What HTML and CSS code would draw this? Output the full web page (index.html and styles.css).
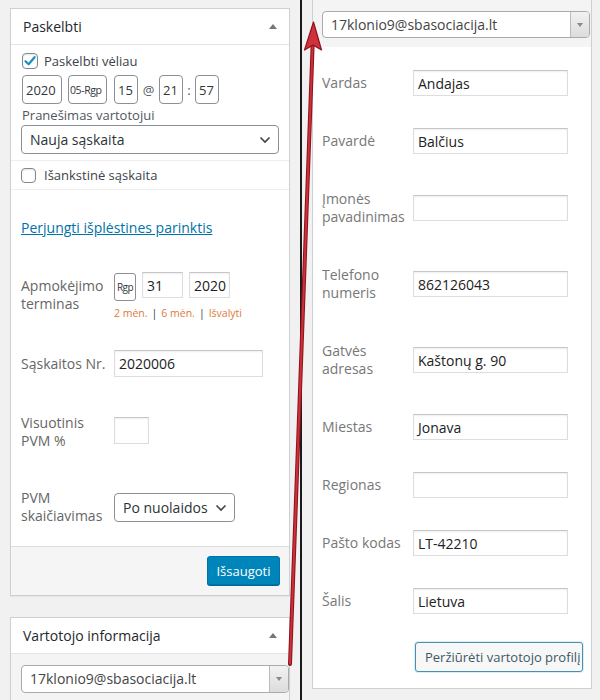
FILE: index.html
```html
<!DOCTYPE html>
<html lang="lt">
<head>
<meta charset="utf-8">
<title>Sąskaita</title>
<link rel="stylesheet" href="styles.css">
</head>
<body>
<div class="screen">
  <div class="col-left">
    <div class="postbox">
      <div class="hndle"><span>Paskelbti</span><span class="toggle"></span></div>
      <div class="inside">
        <div class="check-row">
          <span class="cb checked"><svg viewBox="0 0 16 16" width="16" height="16"><path d="M3.5 8.2 L6.6 11.2 L12.6 4.2" fill="none" stroke="#1e8cbe" stroke-width="2.2" stroke-linecap="round" stroke-linejoin="round"/></svg></span>
          <span>Paskelbti vėliau</span>
        </div>
        <div class="date-row">
          <span class="dbox w-yr">2020</span>
          <span class="dbox w-mo">05-Rgp</span>
          <span class="dbox w-dd">15</span>
          <span class="dsep w-at">@</span>
          <span class="dbox w-dd">21</span>
          <span class="dsep w-col">:</span>
          <span class="dbox w-dd">57</span>
        </div>
        <div class="notice-label">Pranešimas vartotojui</div>
        <div class="wpselect wide"><span>Nauja sąskaita</span><svg class="chev" viewBox="0 0 12 8" width="12" height="8"><path d="M1.5 1.5 L6 6 L10.5 1.5" fill="none" stroke="#3c434a" stroke-width="1.6"/></svg></div>
      </div>
      <div class="misc-row">
        <span class="cb"></span>
        <span>Išankstinė sąskaita</span>
      </div>
      <div class="adv"><a href="#" class="adv-link">Perjungti išplėstines parinktis</a></div>

      <div class="lfield row-due">
        <div class="lbl">Apmokėjimo<br>terminas</div>
        <div class="ctrl">
          <div class="due-boxes">
            <span class="mini-sel">Rgp</span>
            <span class="oinput w-41">31</span>
            <span class="oinput w-41">2020</span>
          </div>
          <div class="due-links"><a href="#">2 mėn.</a><span class="bar">|</span><a href="#">6 mėn.</a><span class="bar">|</span><a href="#">Išvalyti</a></div>
        </div>
      </div>

      <div class="lfield row-nr">
        <div class="lbl">Sąskaitos Nr.</div>
        <span class="oinput w-149">2020006</span>
      </div>

      <div class="lfield row-vat">
        <div class="lbl">Visuotinis<br>PVM %</div>
        <span class="oinput w-35"></span>
      </div>

      <div class="lfield row-calc">
        <div class="lbl">PVM<br>skaičiavimas</div>
        <div class="wpselect calc"><span>Po nuolaidos</span><svg class="chev" viewBox="0 0 12 8" width="12" height="8"><path d="M1.5 1.5 L6 6 L10.5 1.5" fill="none" stroke="#3c434a" stroke-width="1.6"/></svg></div>
      </div>

      <div class="major">
        <button class="btn-primary" type="button">Išsaugoti</button>
      </div>
    </div>

    <div class="postbox second">
      <div class="hndle"><span>Vartotojo informacija</span><span class="toggle"></span></div>
      <div class="grey-body">
        <div class="s2"><span class="s2-txt">17klonio9@sbasociacija.lt</span><span class="s2-arr"><span class="tri-down"></span></span></div>
      </div>
    </div>
  </div>

  <div class="divider"></div>

  <div class="col-right">
    <div class="rpanel">
      <div class="grey-top">
        <div class="s2"><span class="s2-txt">17klonio9@sbasociacija.lt</span><span class="s2-arr"><span class="tri-down"></span></span></div>
      </div>
      <div class="fields">
        <div class="rrow"><div class="rlbl">Vardas</div><span class="oinput rin">Andajas</span></div>
        <div class="rrow"><div class="rlbl">Pavardė</div><span class="oinput rin">Balčius</span></div>
        <div class="rrow"><div class="rlbl two">Įmonės<br>pavadinimas</div><span class="oinput rin"></span></div>
        <div class="rrow"><div class="rlbl two">Telefono<br>numeris</div><span class="oinput rin">862126043</span></div>
        <div class="rrow"><div class="rlbl two">Gatvės<br>adresas</div><span class="oinput rin">Kaštonų g. 90</span></div>
        <div class="rrow"><div class="rlbl">Miestas</div><span class="oinput rin">Jonava</span></div>
        <div class="rrow"><div class="rlbl">Regionas</div><span class="oinput rin"></span></div>
        <div class="rrow"><div class="rlbl">Pašto kodas</div><span class="oinput rin">LT-42210</span></div>
        <div class="rrow"><div class="rlbl">Šalis</div><span class="oinput rin">Lietuva</span></div>
        <div class="btn-row"><button class="btn-secondary" type="button">Peržiūrėti vartotojo profilį</button></div>
      </div>
    </div>
  </div>

  <svg class="arrow" viewBox="0 0 600 700" width="600" height="700">
    <line x1="290" y1="664" x2="312.6" y2="46" stroke="#8e1219" stroke-width="4" stroke-linecap="round"/>
    <line x1="290" y1="664" x2="312.6" y2="46" stroke="#c9303a" stroke-width="2"/>
    <polygon points="313.5,22 321.5,50 313,45 304.5,50" fill="#d0323c" stroke="#8e1219" stroke-width="1.2" stroke-linejoin="round"/>
  </svg>
</div>
</body>
</html>
```

FILE: styles.css
```css
* { box-sizing: border-box; }

body {
  margin: 0;
  background: #f1f1f1;
  font-family: "Open Sans", "Noto Sans", sans-serif;
  color: #444;
}

.screen {
  position: relative;
  display: flex;
  width: 600px;
  height: 700px;
  overflow: hidden;
  background: #f1f1f1;
}

.col-left {
  width: 300px;
  flex: none;
  padding-top: 8px;
}

.divider {
  width: 2px;
  flex: none;
  background: #1a1a1a;
}

.col-right {
  flex: 1;
  padding-left: 10px;
}

/* ---------- postboxes ---------- */
.postbox {
  margin-left: 10px;
  width: 280px;
  border: 1px solid #ccd0d4;
  background: #fff;
  box-shadow: 0 1px 1px rgba(0, 0, 0, .04);
}

.postbox.second {
  margin-top: 21px;
  border-bottom: none;
  height: 100px;
  background: #f4f4f4;
}

.hndle {
  height: 36px;
  border-bottom: 1px solid #e2e4e7;
  background: #fff;
  padding: 0 12px;
  display: flex;
  align-items: center;
  justify-content: space-between;
  font-size: 14px;
  color: #23282d;
}

.toggle {
  width: 0;
  height: 0;
  border-left: 4px solid transparent;
  border-right: 4px solid transparent;
  border-bottom: 5px solid #72777c;
}

.inside {
  padding: 8px 10px 6px;
}

.check-row {
  display: flex;
  align-items: center;
  gap: 6px;
  margin-left: 1px;
  height: 16px;
  font-size: 13px;
  color: #3c434a;
}

.cb {
  width: 16px;
  height: 16px;
  flex: none;
  border: 1px solid #7e8993;
  border-radius: 4px;
  background: #fff;
  display: flex;
  align-items: center;
  justify-content: center;
  box-shadow: inset 0 1px 2px rgba(0, 0, 0, .1);
}

.cb svg { display: block; margin: -1px; }

.date-row {
  display: flex;
  align-items: center;
  margin-top: 6px;
  margin-left: 1px;
  height: 29px;
}

.dbox {
  height: 29px;
  border: 1px solid #8c8f94;
  border-radius: 4px;
  background: #fff;
  display: flex;
  align-items: center;
  padding: 0 3px;
  font-size: 13px;
  color: #32373c;
}

.w-yr { width: 40px; }
.w-mo { width: 39px; margin-left: 6px; font-size: 10.5px; letter-spacing: -.4px; padding: 0 1px; }
.w-dd { width: 24px; }
.w-mo + .w-dd { margin-left: 7px; }

.dsep {
  display: flex;
  justify-content: center;
  font-size: 13px;
  color: #50575e;
}
.w-at { width: 21px; }
.w-col { width: 12px; }

.notice-label {
  margin-top: 2px;
  margin-left: 1px;
  line-height: 19px;
  font-size: 13px;
  color: #50575e;
}

.wpselect {
  height: 29px;
  border: 1px solid #8c8f94;
  border-radius: 4px;
  background: #fff;
  display: flex;
  align-items: center;
  justify-content: space-between;
  padding: 0 8px;
  font-size: 14px;
  color: #2c3338;
}

.wpselect .chev { margin-right: -1px; }

.misc-row {
  border-top: 1px solid #eee;
  border-bottom: 1px solid #eee;
  height: 30px;
  padding: 0 10px;
  display: flex;
  align-items: center;
  gap: 8px;
  font-size: 13px;
  color: #3c434a;
}

.misc-row .cb { width: 15px; height: 15px; }

.adv {
  padding: 27px 10px 0;
  line-height: 20px;
}

.adv-link {
  font-size: 14px;
  color: #0073aa;
  text-decoration: underline;
}

/* ---------- left fields ---------- */
.lfield {
  display: flex;
  padding: 0 10px;
}

.lbl {
  width: 93px;
  flex: none;
  font-size: 14px;
  line-height: 18px;
  color: #666;
}

.row-due { margin-top: 34px; }
.row-due .lbl { padding-top: 5px; }

.due-boxes {
  display: flex;
  align-items: flex-start;
  height: 29px;
}

.mini-sel {
  width: 22px;
  height: 28px;
  margin-top: 1px;
  border: 1px solid #8c8f94;
  border-radius: 3px;
  display: flex;
  align-items: center;
  justify-content: center;
  font-size: 10px;
  letter-spacing: -.5px;
  color: #32373c;
}

.oinput {
  display: flex;
  align-items: center;
  height: 26px;
  border: 1px solid #ddd;
  border-top-color: #c6c6c6;
  background: #fff;
  box-shadow: inset 0 1px 2px rgba(0, 0, 0, .07);
  padding: 0 4px;
  font-size: 14px;
  color: #222;
}

.w-41 { width: 41px; margin-left: 6px; }
.w-149 { width: 149px; height: 27px; }
.w-35 { width: 35px; height: 27px; margin-top: 3px; }

.due-links {
  margin-top: 4px;
  line-height: 16px;
  font-size: 10.5px;
}

.due-links a {
  color: #dd7b3a;
  text-decoration: none;
}

.due-links .bar {
  color: #32373c;
  margin: 0 4px;
}

.row-nr { margin-top: 29px; align-items: center; }
.row-vat { margin-top: 37px; }
.row-calc { margin-top: 39px; }

.wpselect.calc {
  width: 121px;
  margin-top: 4px;
}

.major {
  margin-top: 21px;
  border-top: 1px solid #ddd;
  background: #f5f5f5;
  padding: 9px 9px 10px;
  display: flex;
  justify-content: flex-end;
}

.btn-primary {
  height: 29px;
  width: 73px;
  padding: 0;
  border: 1px solid #0073aa;
  border-radius: 3px;
  background: #0085ba;
  box-shadow: 0 1px 0 #006799;
  color: #fff;
  font-family: inherit;
  font-size: 13px;
}

.grey-body {
  padding: 11px 0 0 10px;
}

/* ---------- select2 ---------- */
.s2 {
  width: 268px;
  height: 28px;
  border: 1px solid #aaa;
  border-radius: 4px;
  background: #fff;
  display: flex;
  font-size: 14px;
  color: #444;
}

.s2-txt {
  flex: 1;
  padding-left: 8px;
  line-height: 26px;
}

.s2-arr {
  width: 19px;
  border-left: 1px solid #bbb;
  border-radius: 0 3px 3px 0;
  background: linear-gradient(#f2f2f2, #dcdcdc);
  display: flex;
  align-items: center;
  justify-content: center;
}

.tri-down {
  width: 0;
  height: 0;
  border-left: 3px solid transparent;
  border-right: 3px solid transparent;
  border-top: 4px solid #888;
}

/* ---------- right panel ---------- */
.rpanel {
  width: 280px;
  border: 1px solid #ccd0d4;
  border-top: none;
  background: #fff;
}

.grey-top {
  background: #f4f4f4;
  padding: 11px 0 9px 9px;
}

.grey-top .s2 { height: 27px; }

.fields {
  padding: 7px 0 16px 9px;
}

.rrow {
  display: flex;
  align-items: center;
  padding: 16px 0;
}

.rlbl {
  width: 91px;
  flex: none;
  font-size: 14px;
  line-height: 18px;
  color: #777;
}

.rlbl.two { padding: 4px 0; }

.rin { width: 155px; }

.btn-row {
  margin-top: 12px;
  padding-left: 93px;
}

.btn-secondary {
  width: 168px;
  height: 30px;
  padding: 0 0 0 9px;
  border: 1px solid #4b8fae;
  border-radius: 3px;
  background: #f7f7f7;
  box-shadow: 0 0 0 1px rgba(30, 140, 190, .15);
  color: #3d5966;
  font-family: inherit;
  font-size: 13px;
  text-align: left;
  white-space: nowrap;
  overflow: hidden;
}

/* ---------- annotation arrow ---------- */
.arrow {
  position: absolute;
  top: 0;
  left: 0;
  pointer-events: none;
}
```
